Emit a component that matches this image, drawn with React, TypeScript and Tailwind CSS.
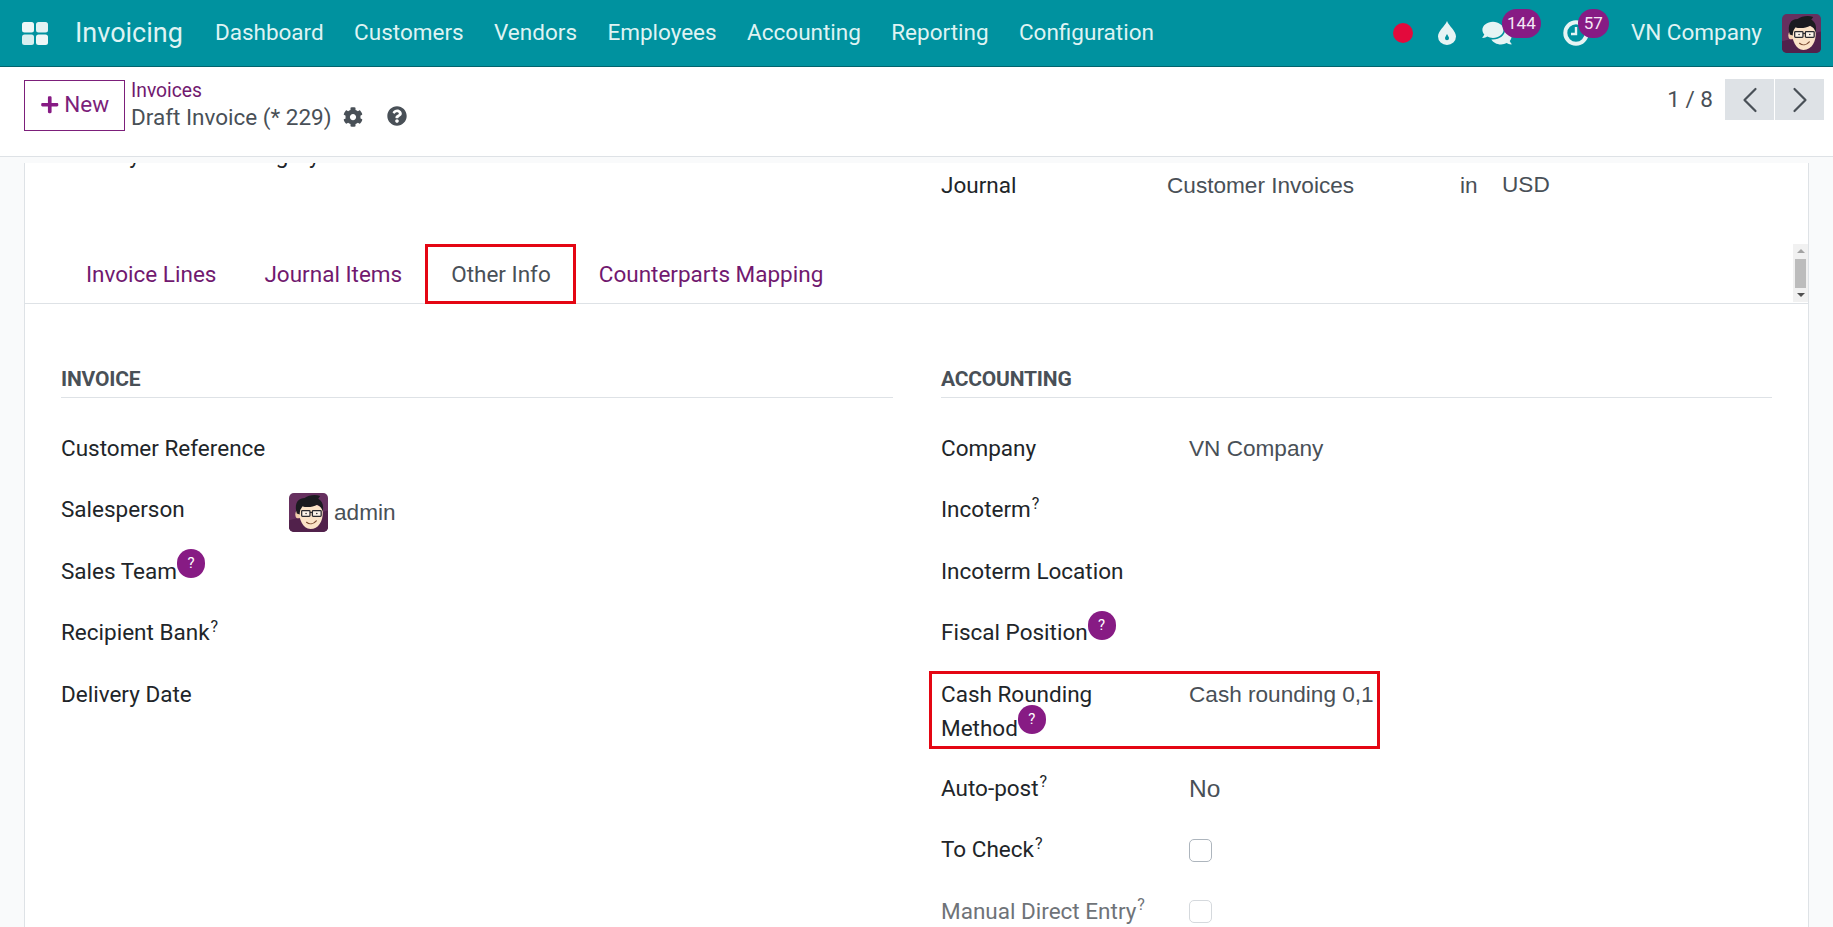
import React from 'react';
import { ChevronLeft, ChevronRight } from 'lucide-react';
import { FaCog, FaComments, FaPlus, FaQuestionCircle } from 'react-icons/fa';

const navItems = ['Dashboard', 'Customers', 'Vendors', 'Employees', 'Accounting', 'Reporting', 'Configuration'];

const Avatar = ({ className }: { className: string }) => (
  <svg viewBox="0 0 40 40" className={className}>
    <rect width="40" height="40" rx="5" fill="#66305f" />
    <path d="M0 28 L40 18 V35 a5 5 0 0 1 -5 5 H5 a5 5 0 0 1 -5 -5 Z" fill="#51214b" />
    <ellipse cx="9.5" cy="22" rx="3" ry="4" fill="#f3cfae" />
    <path d="M10 16 C12 10 33 9 34.5 18 C35.5 27 31 37 22 37 C14 37 10 27 10 16 Z" fill="#fbe3c8" />
    <path d="M8 21 C5 11 9 5 16 5 C20 2 27 1 32 3 L30 6 C34 8 36 13 34.5 19 C33.5 15 31.5 13 29 12 C24 15 17 15 14 13.5 C12 16 11 18 11 22 Z" fill="#1b1b20" />
    <rect x="13" y="18" width="8.5" height="6" rx="0.8" fill="#fff" fillOpacity="0.6" stroke="#2b2b30" strokeWidth="1.3" />
    <rect x="24" y="18" width="9" height="6" rx="0.8" fill="#fff" fillOpacity="0.6" stroke="#2b2b30" strokeWidth="1.3" />
    <path d="M21.5 20 H24" stroke="#2b2b30" strokeWidth="1.2" />
    <circle cx="17.5" cy="21" r="0.8" fill="#2b2b30" />
    <circle cx="28.5" cy="21" r="0.8" fill="#2b2b30" />
    <path d="M18 30 C21 32.5 25 32 28 28.5" stroke="#7a4a30" strokeWidth="1.2" fill="none" strokeLinecap="round" />
  </svg>
);

const AppsIcon = () => (
  <svg viewBox="0 0 26 23" className="w-[26px] h-[23px]">
    <rect x="0" y="0" width="12" height="10.5" rx="2.5" fill="#eef7f7" />
    <rect x="14" y="0" width="12" height="10.5" rx="2.5" fill="#e2f2f3" />
    <rect x="0" y="12.5" width="12" height="10.5" rx="2.5" fill="#d8eeef" />
    <rect x="14" y="12.5" width="12" height="10.5" rx="2.5" fill="#eef7f7" />
  </svg>
);

const DropIcon = () => (
  <svg viewBox="0 0 18 24" className="w-[18px] h-[24px]">
    <path
      fillRule="evenodd"
      fill="#e6f4f4"
      d="M9 0 C11 5 18 10 18 15.5 A9 8.5 0 0 1 0 15.5 C0 10 7 5 9 0 Z M9 13 C8 15 7 16 7 17.2 A2 2 0 0 0 11 17.2 C11 16 10 15 9 13 Z"
    />
  </svg>
);

const ClockIcon = () => (
  <svg viewBox="0 0 26 26" className="w-[26px] h-[26px]" fill="none">
    <circle cx="13" cy="13" r="10.7" stroke="#e6f4f4" strokeWidth="4" />
    <path d="M13 7 V14 H8" stroke="#e6f4f4" strokeWidth="2.4" />
  </svg>
);

const Hint = () => (
  <span className="inline-flex items-center justify-center w-[28px] h-[29px] mb-[16px] rounded-full bg-[#871b84] text-white text-[15px] leading-none shrink-0">
    ?
  </span>
);

const Sup = () => <sup className="text-[16px] ml-[1px] top-[-0.4em]">?</sup>;

const Label = ({ children }: { children: React.ReactNode }) => (
  <span className="flex items-center text-[#212529]">{children}</span>
);

const Value = ({ children }: { children: React.ReactNode }) => (
  <span className="font-['Liberation_Sans',sans-serif] text-[#495057] text-[22.6px]">{children}</span>
);

const Row = ({ label, value, w }: { label: React.ReactNode; value?: React.ReactNode; w: string }) => (
  <div className="flex items-center h-[61.5px]">
    <div className={w}>{label}</div>
    {value}
  </div>
);

const SectionTitle = ({ children }: { children: string }) => (
  <div className="h-[34px] border-b border-[#dee2e6] font-bold text-[#495057] text-[21px] leading-[30px] uppercase tracking-[-0.2px]">
    {children}
  </div>
);

export default function App() {
  return (
    <div className="h-[927px] overflow-hidden flex flex-col bg-[#f9fafb] font-['Roboto',sans-serif] text-[22.5px]">
      <nav className="h-[67px] shrink-0 bg-[#00929f] border-b border-[#01646d] flex items-center text-[#dff3f3]">
        <div className="ml-[22px] mr-[27px]">
          <AppsIcon />
        </div>
        <span className="text-[27px] mr-[32px]">Invoicing</span>
        <div className="flex gap-[30.4px]">
          {navItems.map((item) => (
            <span key={item}>{item}</span>
          ))}
        </div>
        <div className="ml-auto flex items-center">
          <span className="w-[20px] h-[20px] rounded-full bg-[#e30a3c] mr-[25px]" />
          <span className="mr-[26px]"><DropIcon /></span>
          <span className="relative mr-[51px] w-[30px] h-[26px]">
            <FaComments className="w-[30px] h-[26px] text-[#e6f4f4]" />
            <span className="absolute left-[20px] top-[-11px] w-[39px] h-[29px] rounded-full bg-[#871b84] text-[#f5e8f5] text-[17px] flex items-center justify-center">
              144
            </span>
          </span>
          <span className="relative mr-[42px] h-[26px]">
            <ClockIcon />
            <span className="absolute left-[15px] top-[-11px] w-[31px] h-[29px] rounded-full bg-[#871b84] text-[#f5e8f5] text-[17px] flex items-center justify-center">
              57
            </span>
          </span>
          <span className="mr-[20px]">VN Company</span>
          <Avatar className="w-[39px] h-[39px] mr-[12px]" />
        </div>
      </nav>

      <header className="h-[90px] shrink-0 bg-white border-b border-[#dee2e6] flex items-start">
        <button className="ml-[24px] mt-[13px] w-[101px] h-[51px] pb-[2px] border border-[#7c1f7a] text-[#7c1f7a] flex items-center justify-center gap-[5px]">
          <FaPlus className="w-[19.5px] h-[19.5px] text-[#871b84]" />
          New
        </button>
        <div className="ml-[6px] mt-[10px] text-[#495057]">
          <div className="text-[#71196f] text-[19.3px] h-[26px] leading-[28px]">Invoices</div>
          <div className="flex items-center leading-[28px]">
            <span>Draft Invoice (* 229)</span>
            <FaCog className="w-[20px] h-[20px] ml-[11px]" />
            <FaQuestionCircle className="w-[20px] h-[20px] ml-[24px] mb-[2px]" />
          </div>
        </div>
        <div className="ml-auto mr-[9px] mt-[12px] flex items-center text-[#495057]">
          <span className="mr-[12px]">1 / 8</span>
          <div className="flex gap-[1px]">
            <span className="w-[49px] h-[41px] bg-[#dee2e6] flex items-center justify-center">
              <ChevronLeft className="w-[44px] h-[44px]" strokeWidth={1.2} />
            </span>
            <span className="w-[49px] h-[41px] bg-[#dee2e6] flex items-center justify-center">
              <ChevronRight className="w-[44px] h-[44px]" strokeWidth={1.2} />
            </span>
          </div>
        </div>
      </header>

      <main className="flex-1 min-h-0 pt-[6px] px-[24px] overflow-hidden">
        <div className="h-full bg-white border-x border-[#dee2e6] overflow-hidden">
          <div className="h-[81px] px-[36px] grid grid-cols-[832px_831px] gap-x-[48px] items-start">
            <div className="-mt-[23px] text-[#212529] leading-[30px]">Delivery Product Category</div>
            <div className="mt-[7px] h-[30px] flex items-center leading-[30px]">
              <span className="w-[226px] text-[#212529] mb-[1px]">Journal</span>
              <span className="w-[293px]"><Value>Customer Invoices</Value></span>
              <span className="w-[42px]"><Value>in</Value></span>
              <Value>USD</Value>
            </div>
          </div>

          <div className="h-[60px] border-b border-[#dee2e6] flex pl-[37px] text-[#71196f]">
            <span className="px-[24px] pt-[2px] flex items-center">Invoice Lines</span>
            <span className="px-[24px] pt-[2px] flex items-center">Journal Items</span>
            <span className="-ml-[1px] h-[60px] pl-[23px] pr-[22px] pt-[2px] flex items-center border-[3px] border-[#e40613] text-[#495057]">Other Info</span>
            <span className="pl-[23px] pr-[24px] pt-[2px] flex items-center">Counterparts Mapping</span>
            <div className="ml-auto w-[15px] h-[58px] bg-[#f1f1f1] flex flex-col items-center justify-between py-[3px]">
              <span className="w-0 h-0 border-x-[4px] border-x-transparent border-b-[4px] border-b-[#a3a3a3] mt-[2px]" />
              <span className="w-[11px] h-[29px] bg-[#bcbcbc]" />
              <span className="w-0 h-0 border-x-[4px] border-x-transparent border-t-[4px] border-t-[#505050] mb-[2px]" />
            </div>
          </div>

          <div className="px-[36px] pt-[60px] grid grid-cols-[832px_831px] gap-x-[48px] items-start">
            <div>
              <SectionTitle>Invoice</SectionTitle>
              <div className="mt-[20px]">
                <Row w="w-[228px]" label={<Label>Customer Reference</Label>} />
                <Row
                  w="w-[228px]"
                  label={<Label>Salesperson</Label>}
                  value={
                    <span className="flex items-center gap-[6px] mt-[5px]">
                      <Avatar className="w-[39px] h-[39px]" />
                      <Value>admin</Value>
                    </span>
                  }
                />
                <Row w="w-[228px]" label={<Label>Sales Team<Hint /></Label>} />
                <Row w="w-[228px]" label={<Label>Recipient Bank<Sup /></Label>} />
                <Row w="w-[228px]" label={<Label>Delivery Date</Label>} />
              </div>
            </div>

            <div>
              <SectionTitle>Accounting</SectionTitle>
              <div className="mt-[20px]">
                <Row w="w-[248px]" label={<Label>Company</Label>} value={<Value>VN Company</Value>} />
                <Row w="w-[248px]" label={<Label>Incoterm<Sup /></Label>} />
                <Row w="w-[248px]" label={<Label>Incoterm Location</Label>} />
                <Row w="w-[248px]" label={<Label>Fiscal Position<Hint /></Label>} />
                <div className="h-[93.75px] pt-[6.5px]">
                  <div className="-ml-[12px] w-[451px] h-[78px] border-[3px] border-[#e40613] pl-[9px] pt-[3px] flex">
                    <div className="w-[248px] text-[#212529] leading-[34px]">
                      <div>Cash Rounding</div>
                      <div className="flex items-center h-[34px]">Method<Hint /></div>
                    </div>
                    <div className="leading-[34px]"><Value>Cash rounding 0,1</Value></div>
                  </div>
                </div>
                <Row
                  w="w-[248px]"
                  label={<Label>Auto-post<Sup /></Label>}
                  value={<span className="font-['Liberation_Sans',sans-serif] text-[#495057] text-[24.5px] mt-[2px]">No</span>}
                />
                <Row
                  w="w-[248px]"
                  label={<Label>To Check<Sup /></Label>}
                  value={<span className="w-[23px] h-[23px] rounded-[5px] border border-[#adb5bd] bg-white" />}
                />
                <Row
                  w="w-[248px]"
                  label={<span className="flex items-center text-[#6f7378]">Manual Direct Entry<Sup /></span>}
                  value={<span className="w-[23px] h-[23px] rounded-[5px] border border-[#d5d9dd] bg-white" />}
                />
              </div>
            </div>
          </div>
        </div>
      </main>
    </div>
  );
}
